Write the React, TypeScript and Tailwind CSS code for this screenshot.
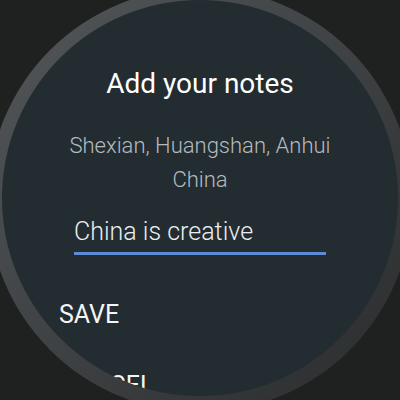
export default function App() {
  return (
    <div className="w-[400px] h-[400px] bg-[#1f2020] overflow-hidden flex items-center justify-center font-['Roboto',sans-serif]">
      <div className="w-[424px] h-[424px] shrink-0 rounded-full bg-linear-to-br from-[#55585a] via-[#3f4244] to-[#292b2c] flex items-center justify-center pb-[4px]">
        <div className="w-[396px] h-[396px] shrink-0 rounded-full bg-[#222c31] overflow-hidden flex flex-col items-center">
          <h1 className="mt-[67px] text-[28px] leading-[34px] text-white">Add your notes</h1>
          <p className="mt-[28px] text-[22px] leading-[34px] font-light text-[#b4bbbf] text-center">
            Shexian, Huangshan, Anhui
            <br />
            China
          </p>
          <div className="mt-[18px] w-[252px] pb-[3px] border-b-[3px] border-[#5c8ad6]">
            <span className="text-[25px] leading-[34px] font-light text-[#eceeef]">China is creative</span>
          </div>
          <div className="self-start ml-[57px] mt-[43px] flex flex-col gap-[37px]">
            <button className="text-left text-[25px] leading-[34px] text-[#f4f5f5]">SAVE</button>
            <button className="text-left text-[25px] leading-[34px] text-[#f4f5f5]">CANCEL</button>
          </div>
        </div>
      </div>
    </div>
  );
}
